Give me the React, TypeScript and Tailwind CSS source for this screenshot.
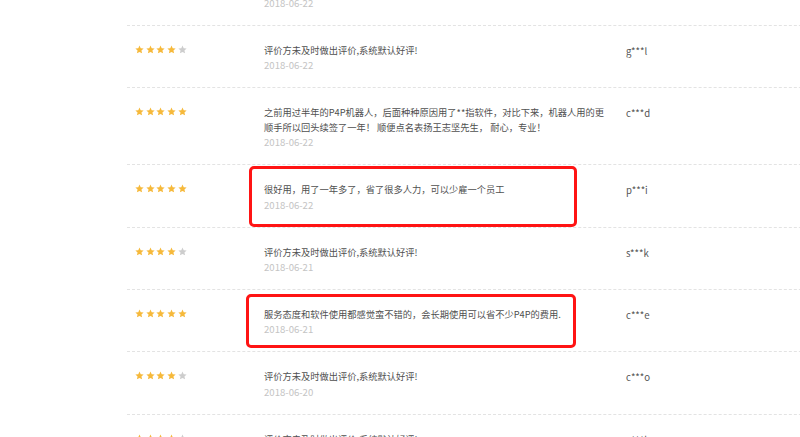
import React from "react";

interface Review {
  stars: number;
  text: string;
  date: string;
  user: string;
  mark?: "a" | "b";
}

const reviews: Review[] = [
  { stars: 4, text: "评价方未及时做出评价,系统默认好评!", date: "2018-06-22", user: "x***x" },
  { stars: 4, text: "评价方未及时做出评价,系统默认好评!", date: "2018-06-22", user: "g***l" },
  {
    stars: 5,
    text: "之前用过半年的P4P机器人，后面种种原因用了**指软件，对比下来，机器人用的更顺手所以回头续签了一年！ 顺便点名表扬王志坚先生， 耐心，专业！",
    date: "2018-06-22",
    user: "c***d",
  },
  { stars: 5, text: "很好用，用了一年多了，省了很多人力，可以少雇一个员工", date: "2018-06-22", user: "p***i", mark: "a" },
  { stars: 4, text: "评价方未及时做出评价,系统默认好评!", date: "2018-06-21", user: "s***k" },
  { stars: 5, text: "服务态度和软件使用都感觉蛮不错的，会长期使用可以省不少P4P的费用.", date: "2018-06-21", user: "c***e", mark: "b" },
  { stars: 4, text: "评价方未及时做出评价,系统默认好评!", date: "2018-06-20", user: "c***o" },
  { stars: 4, text: "评价方未及时做出评价,系统默认好评!", date: "2018-06-20", user: "c***h" },
];

function Star({ on }: { on: boolean }) {
  return (
    <svg width="9" height="9" viewBox="0 0 24 24" className={on ? "fill-[#f6b93b]" : "fill-[#cdcdcd]"}>
      <path d="M12 1.5l3.2 7.1 7.8.8-5.8 5.2 1.7 7.7L12 18.4l-6.9 3.9 1.7-7.7L1 9.4l7.8-.8z" />
    </svg>
  );
}

function ReviewRow({ r, first }: { r: Review; first?: boolean }) {
  return (
    <div className="relative flex border-b border-dashed border-[#e3e3e3] pt-[17px] pb-[14px]">
      <div className="w-[137px] shrink-0 pl-[8px] pt-[2px] flex gap-[1.7px] items-start h-[12px]">
        {[0, 1, 2, 3, 4].map((i) => (
          <Star key={i} on={i < r.stars} />
        ))}
      </div>
      <div className="w-[362px] shrink-0 pr-[14px]">
        <p className={`text-[9.25px] leading-[14.4px] text-[#505050] ${first ? "invisible" : ""}`}>{r.text}</p>
        <p className="text-[9.6px] leading-[16px] text-[#c4c4c4]">{r.date}</p>
      </div>
      <div className={`text-[9.6px] leading-[14.4px] text-[#555] pt-[1px] ${first ? "invisible" : ""}`}>{r.user}</div>
      {r.mark === "a" && (
        <div className="absolute left-[122px] top-[1px] w-[328px] h-[61px] border-[3px] border-[#ff1414] rounded-[5px]" />
      )}
      {r.mark === "b" && (
        <div className="absolute left-[119px] top-[4px] w-[330px] h-[54px] border-[3px] border-[#ff1414] rounded-[5px]" />
      )}
    </div>
  );
}

export default function App() {
  return (
    <div
      className="h-[437px] w-[800px] overflow-hidden bg-white"
      style={{ fontFamily: '"Noto Sans CJK SC", "Noto Sans", sans-serif' }}
    >
      <div className="ml-[127px] w-[720px] -mt-[36.4px]">
        {reviews.map((r, i) => (
          <ReviewRow key={i} r={r} first={i === 0} />
        ))}
      </div>
    </div>
  );
}
